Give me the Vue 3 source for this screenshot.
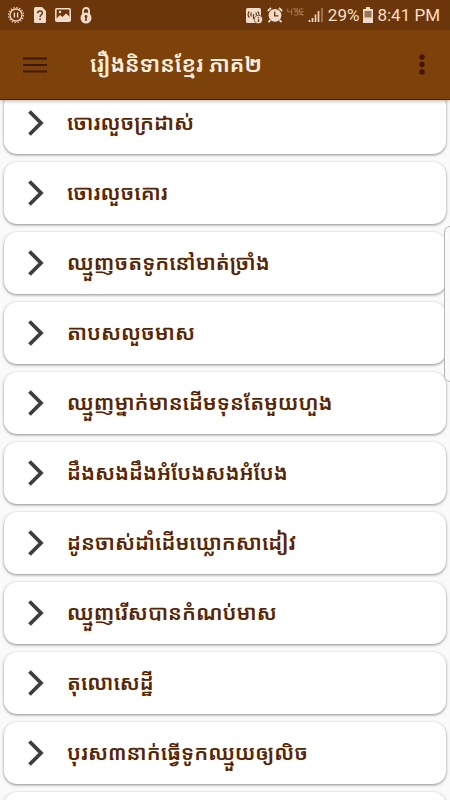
<script setup>
import { ref } from "vue";

const title = "រឿងនិទានខ្មែរ ភាគ២";

const stories = ref([
  "ចោរលួចក្រដាស់",
  "ចោរលួចគោរ",
  "ឈ្មួញចតទូកនៅមាត់ច្រាំង",
  "តាបសលួចមាស",
  "ឈ្មួញម្នាក់មានដើមទុនតែមួយហួង",
  "ដឹងសងដឹងអំបែងសងអំបែង",
  "ដូនចាស់ដាំដើមឃ្លោកសាដៀវ",
  "ឈ្មួញរើសបានកំណប់មាស",
  "តុលោសេដ្ឋី",
  "បុរស៣នាក់ធ្វើទូកឈ្មួយឲ្យលិច",
  "",
]);
</script>

<template>
  <div class="app">
    <header class="header">
      <div class="status">
        <div class="status_left">
          <svg width="18" height="18" viewBox="0 0 18 18">
            <circle cx="9" cy="9" r="6" fill="none" stroke="#f0d5bd" stroke-width="1.4" />
            <circle cx="9" cy="9" r="7.500" fill="none" stroke="#f0d5bd" stroke-width="1.2" stroke-dasharray="1.4 1.55" />
            <path d="M7.400 6.500v5M10.600 6.500v5" stroke="#f0d5bd" stroke-width="1.4" />
          </svg>
          <svg width="12" height="16" viewBox="0 0 12 16">
            <path d="M1.500 0H8l4 4v10.500a1.500 1.500 0 0 1-1.500 1.500h-9A1.500 1.500 0 0 1 0 14.500v-13A1.500 1.500 0 0 1 1.500 0z" fill="#f0dccb" />
            <path d="M3.700 6.200c0-3 4.700-3 4.700-.2 0 1.800-2.300 1.800-2.300 3.900M6.100 11.200v1.700" fill="none" stroke="#6b370a" stroke-width="1.500" />
          </svg>
          <svg width="16" height="14" viewBox="0 0 16 14">
            <rect x=".8" y=".8" width="14.400" height="12.400" rx="1" fill="none" stroke="#f0dccb" stroke-width="1.600" />
            <path d="M1 11l4-4 2.500 2L11 5.500 15 9v4H1z" fill="#f0dccb" />
            <circle cx="5" cy="4" r="1.200" fill="#f0dccb" />
          </svg>
          <svg width="12" height="17" viewBox="0 0 12 17">
            <path d="M3 8V4a3 3 0 0 1 6 0v4" fill="none" stroke="#f0dccb" stroke-width="1.800" />
            <circle cx="6" cy="11" r="5.500" fill="#f0dccb" />
            <path d="M6 9v5" stroke="#6b370a" stroke-width="1.600" />
            <circle cx="6" cy="9.500" r="1.400" fill="#6b370a" />
          </svg>
        </div>
        <div class="status_right">
          <svg width="17" height="17" viewBox="0 0 17 17">
            <rect y="1" width="15" height="15" rx="1.500" fill="#f0dccb" />
            <path d="M3.300 4.500c-1.400 1.700-1.400 4.300 0 6M5.500 5.500c-.8 1.200-.8 2.800 0 4M9.700 5.500c.8 1 .8 2 .4 3M11.800 4.500c.9 1 1.100 2.200 1 3.300M7.500 7v5" fill="none" stroke="#6b370a" stroke-width="1.200" />
            <circle cx="12.500" cy="12.500" r="4.200" fill="#f0dccb" stroke="#6b370a" stroke-width=".8" />
            <path d="M12.500 10v1.200M12.500 12.200V15" stroke="#6b370a" stroke-width="1.300" />
          </svg>
          <svg width="16" height="16" viewBox="0 0 16 16">
            <circle cx="8" cy="8.300" r="6.400" fill="#f0dccb" />
            <path d="M.8 4L4 .9M12 .9L15.200 4M3.500 13L1.500 15.200M12.500 13l2 2.200" stroke="#f0dccb" stroke-width="1.800" />
            <path d="M7.700 4.500v4.300h3.600" fill="none" stroke="#6b370a" stroke-width="1.300" />
          </svg>
          <svg class="network" width="17" height="9" viewBox="0 0 17 9">
            <path d="M.7.500v3.300h4M4.700.500V7M7 1h4L7.500 4h3.500v3H7M16.500 1h-4v2.500h4M16.500 6.500h-4l3.500-3M6 .500l5 2.500 5.500 5" fill="none" stroke="#a57a56" stroke-width=".9" />
          </svg>
          <svg class="signal" width="16" height="16" viewBox="0 0 16 16">
            <path d="M1.500 15v-2M4.500 15v-4M7.500 15V7.500M10.500 15V4" stroke="#f0d5bd" stroke-width="1.700" />
            <path d="M14 15V1" stroke="#a57a56" stroke-width="1.700" />
          </svg>
          <span class="percent">29%</span>
          <svg class="battery" width="10" height="16" viewBox="0 0 10 16">
            <path d="M3 0h4v2h3v14H0V2h3z" fill="#f0dccb" />
            <path d="M1.500 4h7v6.500h-7z" fill="#9c7454" />
          </svg>
          <span>8:41 PM</span>
        </div>
      </div>
      <nav class="toolbar">
        <button type="button" class="icon_bt" aria-label="ម៉ឺនុយ">
          <svg width="24" height="16" viewBox="0 0 24 16">
            <path d="M0 1.500h24M0 8h24M0 14.500h24" stroke="#3c1a02" stroke-width="2" />
          </svg>
        </button>
        <h1 class="title">{{ title }}</h1>
        <button type="button" class="icon_bt" aria-label="ជម្រើស">
          <svg width="6" height="21" viewBox="0 0 6 21">
            <circle cx="3" cy="3" r="2.700" fill="#451500" />
            <circle cx="3" cy="10.500" r="2.700" fill="#451500" />
            <circle cx="3" cy="18" r="2.700" fill="#451500" />
          </svg>
        </button>
      </nav>
    </header>

    <main class="list">
      <button type="button" class="card" v-for="(name, index) in stories" :key="index">
        <svg width="16" height="26" viewBox="0 0 16 26">
          <path d="M1.500 1.500L13 13 1.500 24.500" fill="none" stroke="#3e3e40" stroke-width="3.800" />
        </svg>
        <span class="card_text">{{ name }}</span>
      </button>
      <div class="scroll_thumb"></div>
    </main>
  </div>
</template>

<style>
body {
  background: #fafafa;
}
</style>

<style scoped>
.app {
  display: flex;
  flex-direction: column;
  height: 100vh;
  overflow: hidden;
  background: #fafafa;
  font-family: Roboto, "Noto Sans", "Noto Sans Khmer", sans-serif;
}

.header {
  position: relative;
  z-index: 1;
  flex: none;
  background: #7d410a;
  border-bottom: 1px solid #541c02;
  box-shadow: 0 1px 4px rgba(0, 0, 0, 0.3);
}

.status {
  display: flex;
  justify-content: space-between;
  align-items: center;
  height: 30px;
  padding: 0 10px 0 7px;
  background: #6b370a;
  color: #fbdfc9;
  font-size: 17px;
  line-height: 30px;
}

.status_left {
  display: flex;
  align-items: center;
  gap: 9px;
}

.status_right {
  display: flex;
  align-items: center;
  gap: 4px;
}
.network {
  margin-bottom: 6px;
}

.toolbar {
  display: flex;
  align-items: center;
  height: 69px;
  padding: 0 12px;
}

.icon_bt {
  display: flex;
  justify-content: center;
  align-items: center;
  width: 46px;
  height: 46px;
  padding: 0;
  border: none;
  background: none;
  cursor: pointer;
}
.icon_bt:last-child {
  width: 32px;
}

.title {
  flex: 1;
  margin: 0;
  padding-left: 32px;
  color: #fff0e0;
  font-size: 22px;
  font-weight: 600;
  line-height: 46px;
  white-space: nowrap;
}

/* scrolled part way, the first card sits under the header */
.list {
  position: relative;
  display: flex;
  flex-direction: column;
  gap: 8px;
  flex: 1;
  min-height: 0;
  margin-top: -8px;
  padding: 0 4px;
  overflow: hidden;
}

.card {
  display: flex;
  align-items: center;
  gap: 23px;
  flex: none;
  height: 62px;
  padding: 0 24px;
  border: none;
  border-radius: 13px;
  background: #fff;
  box-shadow: 0 1px 3px rgba(0, 0, 0, 0.45);
  color: #5a2400;
  font-family: inherit;
  text-align: left;
  cursor: pointer;
}

.card_text {
  font-size: 21px;
  font-weight: 600;
  line-height: 32px;
  white-space: nowrap;
}

.scroll_thumb {
  position: absolute;
  top: 134px;
  right: -6px;
  width: 10px;
  height: 154px;
  border: 1px solid #b5b5b5;
  border-radius: 6px;
  background: #fafafa;
}
</style>
